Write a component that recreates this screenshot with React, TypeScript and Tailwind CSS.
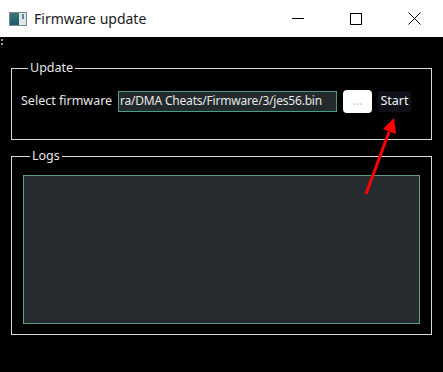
import React from "react";

function TitleBar() {
  return (
    <div className="flex h-[37px] items-center bg-white text-black">
      {/* app icon */}
      <div className="ml-[9px] flex h-[14px] w-[18px] items-stretch border border-[#7a8a90] bg-[#dfe6e8]">
        <div className="w-[9px] bg-gradient-to-b from-[#3a7a6e] to-[#1f5a70]" />
        <div className="flex-1" />
        <div className="mr-[2px] mt-[1px] h-[5px] w-[2px] bg-[#5a8aa0]" />
      </div>
      <span className="ml-[7px] text-[14px] leading-none text-[#1a1a1a]">Firmware update</span>
      <div className="ml-auto flex h-full items-center">
        <div className="flex h-full w-[58px] items-center justify-center">
          <div className="h-px w-[12px] bg-black" />
        </div>
        <div className="flex h-full w-[58px] items-center justify-center">
          <div className="h-[12px] w-[12px] border border-black" />
        </div>
        <div className="flex h-full w-[58px] items-center justify-center">
          <svg width="13" height="13" viewBox="0 0 13 13">
            <path d="M0.5 0.5 L12.5 12.5 M12.5 0.5 L0.5 12.5" stroke="#000" strokeWidth="1" />
          </svg>
        </div>
      </div>
    </div>
  );
}

export default function App() {
  return (
    <div
      className="relative flex h-[372px] w-[443px] flex-col overflow-hidden bg-black"
      style={{ fontFamily: '"Noto Sans", "Open Sans", sans-serif' }}
    >
      <TitleBar />

      <div className="relative flex flex-1 flex-col px-[11px] pt-[25px] text-[12.5px] text-[#e6e6e6]">
        <div className="absolute left-[1px] top-[2px] flex flex-col gap-[2px]">
          <div className="h-[2px] w-[2px] bg-[#9a9a9a]" />
          <div className="h-[2px] w-[2px] bg-[#9a9a9a]" />
        </div>

        <fieldset className="h-[78px] border border-[#d9d9d9] px-[9px]">
          <legend className="ml-[7px] px-[2px] leading-none">Update</legend>
          <div className="mt-[15px] flex items-center">
            <span className="w-[97px] leading-none">Select firmware</span>
            <div className="flex h-[21px] w-[219px] items-center overflow-hidden border border-[#4e9a85] bg-[#232a2c] px-[1px] text-[12px] leading-none tracking-[-0.2px] whitespace-nowrap">
              ra/DMA Cheats/Firmware/3/jes56.bin
            </div>
            <div className="ml-[6px] flex h-[23px] w-[29px] items-center justify-center rounded-[4px] bg-white leading-none text-[#c9c9c9]">
              ...
            </div>
            <div className="ml-[6px] flex h-[21px] w-[33px] items-center justify-center rounded-[3px] bg-[#10101a] leading-none text-[#f0f0f0]">
              Start
            </div>
          </div>
        </fieldset>

        <fieldset className="mt-[10px] h-[185px] border border-[#d9d9d9] px-[11px] pb-[11px]">
          <legend className="ml-[7px] px-[2px] leading-none">Logs</legend>
          <div className="mt-[12px] h-[149px] border border-[#5c9c88] bg-[#252b2e]" />
        </fieldset>
      </div>

      {/* annotation arrow */}
      <svg className="pointer-events-none absolute left-0 top-0" width="443" height="372" viewBox="0 0 443 372">
        <line x1="366" y1="194" x2="389" y2="132" stroke="#ff0000" strokeWidth="3" />
        <polygon points="394,118 396,134 383,129" fill="#ff0000" />
      </svg>
    </div>
  );
}
